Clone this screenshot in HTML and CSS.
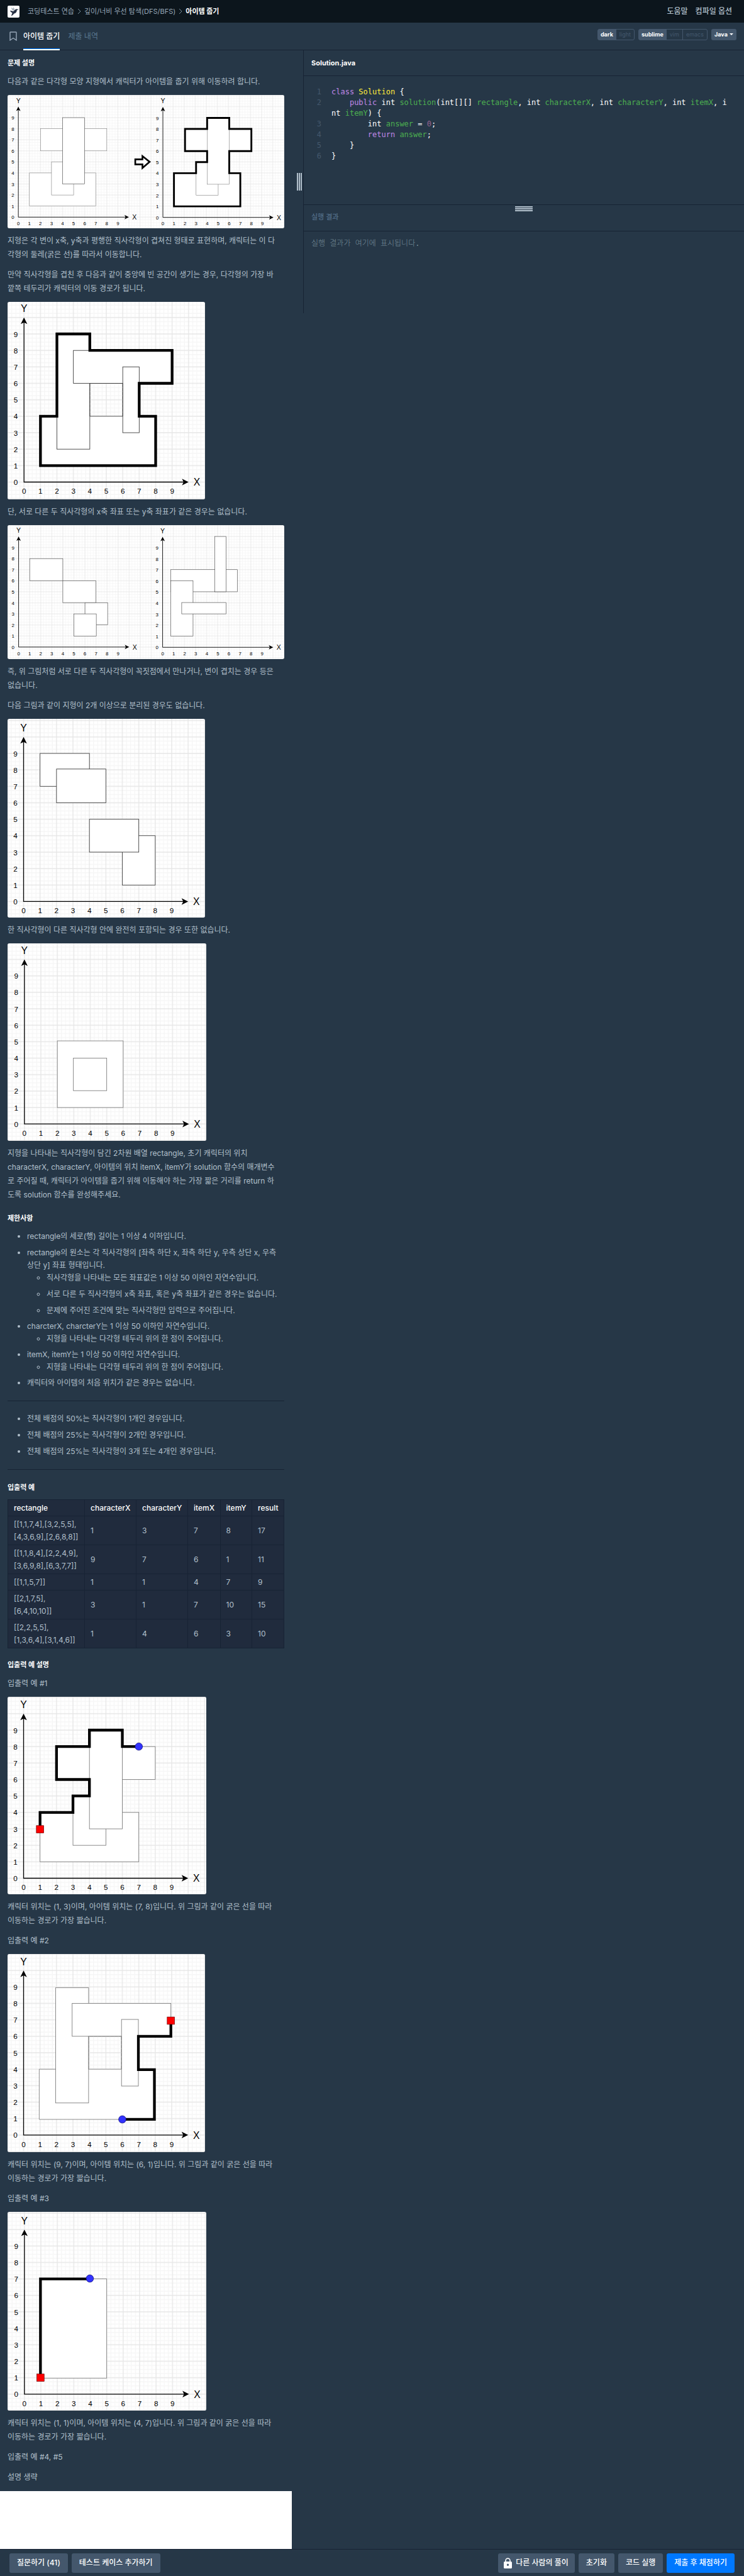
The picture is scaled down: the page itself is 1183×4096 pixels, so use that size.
FILE: index.html
```html
<!DOCTYPE html>
<html lang="ko">
<head>
<meta charset="utf-8">
<meta name="viewport" content="width=device-width, initial-scale=1">
<title>코딩테스트 연습 - 아이템 줍기</title>
<link rel="stylesheet" href="styles.css">
</head>
<body>
<!-- Shared drawing parts: graph paper, axes with labels, markers. One unit is 40. -->
<svg class="defs" width="0" height="0" aria-hidden="true">
  <defs>
    <pattern id="paper" width="40" height="40" patternUnits="userSpaceOnUse">
      <path class="minor" d="M10 0V40M20 0V40M30 0V40M0 10H40M0 20H40M0 30H40"/>
      <path class="major" d="M0 0V40M40 0V40M0 0H40M0 40H40"/>
    </pattern>
    <g id="axes">
      <path class="axis" d="M0 -390V0H390"/>
      <path d="M0 -400L8 -384L0 -388L-8 -384Z"/>
      <path d="M400 0L384 8L388 0L384 -8Z"/>
      <g class="tick">
        <text x="-20" y="7">0</text><text x="-20" y="-33">1</text><text x="-20" y="-73">2</text><text x="-20" y="-113">3</text><text x="-20" y="-153">4</text><text x="-20" y="-193">5</text><text x="-20" y="-233">6</text><text x="-20" y="-273">7</text><text x="-20" y="-313">8</text><text x="-20" y="-353">9</text>
        <text x="0" y="29">0</text><text x="40" y="29">1</text><text x="80" y="29">2</text><text x="120" y="29">3</text><text x="160" y="29">4</text><text x="200" y="29">5</text><text x="240" y="29">6</text><text x="280" y="29">7</text><text x="320" y="29">8</text><text x="360" y="29">9</text>
      </g>
      <g class="name"><text x="0" y="-413">Y</text><text x="420" y="9">X</text></g>
    </g>
    <rect id="start" x="-9" y="-9" width="18" height="18"/>
    <circle id="item" r="9"/>
  </defs>
</svg>

<header class="topbar">
  <a class="logo" href="#" aria-label="홈">
    <svg viewBox="0 0 30 30" width="18" height="18" aria-hidden="true">
      <path fill="#a9b3bd" d="M8 5l5 3 1-4 3 5-1 5-6-3z"/>
      <path fill="#263043" d="M5 13l9 2 3-3c2-2 3-3 5-3l6 1-5 2c0 5-3 8-7 9l-5 5-3 1 3-8c-3-1-5-3-6-6z"/>
    </svg>
  </a>
  <nav class="crumbs" aria-label="위치">
    <a href="#">코딩테스트 연습</a>
    <svg viewBox="0 0 6 10" width="6" height="10" aria-hidden="true"><path d="M1 1l4 4-4 4"/></svg>
    <a href="#">깊이/너비 우선 탐색(DFS/BFS)</a>
    <svg viewBox="0 0 6 10" width="6" height="10" aria-hidden="true"><path d="M1 1l4 4-4 4"/></svg>
    <strong>아이템 줍기</strong>
  </nav>
  <nav class="help"><a href="#">도움말</a><a href="#">컴파일 옵션</a></nav>
</header>

<div class="tabbar">
  <button class="bookmark" type="button" aria-label="북마크">
    <svg viewBox="0 0 12 15" width="12" height="15" aria-hidden="true"><path d="M1 1.5Q1 1 2 1h8q1 0 1 .5V14L6 10.500 1 14z"/></svg>
  </button>
  <nav class="tabs"><a class="tab active" href="#">아이템 줍기</a><a class="tab" href="#">제출 내역</a></nav>
  <div class="options">
    <div class="toggle"><button class="on" type="button">dark</button><button type="button">light</button></div>
    <div class="toggle"><button class="on" type="button">sublime</button><button type="button">vim</button><button type="button">emacs</button></div>
    <div class="language"><select aria-label="언어"><option>Java</option></select></div>
  </div>
</div>

<main class="workspace">
  <section class="description">
    <div class="guide">
      <h2>문제 설명</h2>
      <p>다음과 같은 다각형 모양 지형에서 캐릭터가 아이템을 줍기 위해 이동하려 합니다.</p>
      <figure class="wide">
        <svg viewBox="-39 -442 1001 483" role="img" aria-label="겹쳐진 직사각형과 그 둘레">
          <rect class="paper" x="-39" y="-442" width="1001" height="483"/>
          <use href="#axes"/>
          <g class="box soft"><rect x="40" y="-160" width="240" height="120"/><rect x="120" y="-200" width="80" height="120"/><rect x="80" y="-320" width="240" height="80"/></g>
          <g class="box"><rect x="160" y="-360" width="80" height="240"/></g>
          <path class="arrow" d="M423 -209H449V-221L475 -200L449 -178V-191H423Z"/>
          <g transform="translate(523 1)">
            <use href="#axes"/>
            <g class="box soft"><rect x="40" y="-160" width="240" height="120"/><rect x="120" y="-200" width="80" height="120"/><rect x="80" y="-320" width="240" height="80"/><rect x="160" y="-360" width="80" height="240"/></g>
            <path class="route" d="M40 -40V-160H120V-200H160V-240H80V-320H160V-360H240V-320H320V-240H240V-160H280V-40Z"/>
          </g>
        </svg>
      </figure>
      <p>지형은 각 변이 x축, y축과 평행한 직사각형이 겹쳐진 형태로 표현하며, 캐릭터는 이 다<br>각형의 둘레(굵은 선)를 따라서 이동합니다.</p>
      <p>만약 직사각형을 겹친 후 다음과 같이 중앙에 빈 공간이 생기는 경우, 다각형의 가장 바<br>깥쪽 테두리가 캐릭터의 이동 경로가 됩니다.</p>
      <figure>
        <svg viewBox="-40 -438 480 480" role="img" aria-label="가운데가 빈 지형의 바깥쪽 테두리">
          <rect class="paper" x="-40" y="-438" width="480" height="480"/>
          <use href="#axes"/>
          <g class="box"><path d="M40 -160H160V-240H240V-160H320V-40H40Z"/><rect x="80" y="-360" width="80" height="280"/><rect x="120" y="-320" width="240" height="80"/><rect x="240" y="-280" width="40" height="160"/></g>
          <path class="hole" d="M160 -240H240V-160H160Z"/>
          <path class="route" d="M40 -40V-160H80V-360H160V-320H360V-240H280V-160H320V-40Z"/>
        </svg>
      </figure>
      <p>단, 서로 다른 두 직사각형의 x축 좌표 또는 y축 좌표가 같은 경우는 없습니다.</p>
      <figure class="wide">
        <svg viewBox="-40 -441 1001 483" role="img" aria-label="꼭짓점이나 변이 만나는 직사각형">
          <rect class="paper" x="-40" y="-441" width="1001" height="483"/>
          <use href="#axes"/>
          <g class="box"><rect x="40" y="-320" width="120" height="80"/><rect x="160" y="-240" width="120" height="80"/><rect x="240" y="-160" width="82" height="80"/><rect x="200" y="-120" width="81" height="80"/></g>
          <use href="#axes" x="521" y="1"/>
          <g class="box" transform="translate(510 0)"><rect x="40" y="-280" width="241" height="80"/><rect x="40" y="-240" width="81" height="200"/><rect x="200" y="-400" width="41" height="200"/><rect x="80" y="-161" width="161" height="41"/></g>
        </svg>
      </figure>
      <p>즉, 위 그림처럼 서로 다른 두 직사각형이 꼭짓점에서 만나거나, 변이 겹치는 경우 등은<br>없습니다.</p>
      <p>다음 그림과 같이 지형이 2개 이상으로 분리된 경우도 없습니다.</p>
      <figure>
        <svg viewBox="-39 -444 480 483" role="img" aria-label="두 개로 분리된 지형">
          <rect class="paper" x="-39" y="-444" width="480" height="483"/>
          <use href="#axes"/>
          <g class="box"><rect x="40" y="-360" width="120" height="80"/><rect x="80" y="-322" width="120" height="82"/><rect x="240" y="-160" width="80" height="120"/><rect x="160" y="-200" width="120" height="80"/></g>
        </svg>
      </figure>
      <p>한 직사각형이 다른 직사각형 안에 완전히 포함되는 경우 또한 없습니다.</p>
      <figure class="large">
        <svg viewBox="-41 -439 483 480" role="img" aria-label="안에 포함된 직사각형">
          <rect class="paper" x="-41" y="-439" width="483" height="480"/>
          <use href="#axes"/>
          <g class="box soft"><rect x="80" y="-202" width="160" height="162"/><rect x="119" y="-160" width="81" height="79"/></g>
        </svg>
      </figure>
      <p>지형을 나타내는 직사각형이 담긴 2차원 배열 rectangle, 초기 캐릭터의 위치<br>characterX, characterY, 아이템의 위치 itemX, itemY가 solution 함수의 매개변수<br>로 주어질 때, 캐릭터가 아이템을 줍기 위해 이동해야 하는 가장 짧은 거리를 return 하<br>도록 solution 함수를 완성해주세요.</p>

      <h2>제한사항</h2>
      <ul>
        <li>rectangle의 세로(행) 길이는 1 이상 4 이하입니다.</li>
        <li>rectangle의 원소는 각 직사각형의 [좌측 하단 x, 좌측 하단 y, 우측 상단 x, 우측<br>상단 y] 좌표 형태입니다.
          <ul>
            <li>직사각형을 나타내는 모든 좌표값은 1 이상 50 이하인 자연수입니다.</li>
            <li>서로 다른 두 직사각형의 x축 좌표, 혹은 y축 좌표가 같은 경우는 없습니다.</li>
            <li>문제에 주어진 조건에 맞는 직사각형만 입력으로 주어집니다.</li>
          </ul>
        </li>
        <li>charcterX, charcterY는 1 이상 50 이하인 자연수입니다.
          <ul><li>지형을 나타내는 다각형 테두리 위의 한 점이 주어집니다.</li></ul>
        </li>
        <li>itemX, itemY는 1 이상 50 이하인 자연수입니다.
          <ul><li>지형을 나타내는 다각형 테두리 위의 한 점이 주어집니다.</li></ul>
        </li>
        <li>캐릭터와 아이템의 처음 위치가 같은 경우는 없습니다.</li>
      </ul>
      <hr>
      <ul>
        <li>전체 배점의 50%는 직사각형이 1개인 경우입니다.</li>
        <li>전체 배점의 25%는 직사각형이 2개인 경우입니다.</li>
        <li>전체 배점의 25%는 직사각형이 3개 또는 4개인 경우입니다.</li>
      </ul>
      <hr>

      <h2>입출력 예</h2>
      <table>
        <thead><tr><th scope="col">rectangle</th><th scope="col">characterX</th><th scope="col">characterY</th><th scope="col">itemX</th><th scope="col">itemY</th><th scope="col">result</th></tr></thead>
        <tbody>
          <tr><td>[[1,1,7,4],[3,2,5,5],<br>[4,3,6,9],[2,6,8,8]]</td><td>1</td><td>3</td><td>7</td><td>8</td><td>17</td></tr>
          <tr><td>[[1,1,8,4],[2,2,4,9],<br>[3,6,9,8],[6,3,7,7]]</td><td>9</td><td>7</td><td>6</td><td>1</td><td>11</td></tr>
          <tr><td>[[1,1,5,7]]</td><td>1</td><td>1</td><td>4</td><td>7</td><td>9</td></tr>
          <tr><td>[[2,1,7,5],<br>[6,4,10,10]]</td><td>3</td><td>1</td><td>7</td><td>10</td><td>15</td></tr>
          <tr><td>[[2,2,5,5],<br>[1,3,6,4],[3,1,4,6]]</td><td>1</td><td>4</td><td>6</td><td>3</td><td>10</td></tr>
        </tbody>
      </table>

      <h2>입출력 예 설명</h2>
      <p>입출력 예 #1</p>
      <figure class="large">
        <svg viewBox="-39 -441 483 480" role="img" aria-label="예 1의 가장 짧은 경로">
          <rect class="paper" x="-39" y="-441" width="483" height="480"/>
          <use href="#axes"/>
          <g class="box soft"><rect x="40" y="-160" width="240" height="120"/><rect x="120" y="-200" width="80" height="120"/><rect x="80" y="-320" width="240" height="80"/><rect x="160" y="-360" width="80" height="240"/></g>
          <path class="route" d="M40 -120V-160H120V-200H160V-240H80V-320H160V-360H240V-320H280"/>
          <use class="start" href="#start" x="40" y="-119"/><use class="item" href="#item" x="280" y="-320"/>
        </svg>
      </figure>
      <p>캐릭터 위치는 (1, 3)이며, 아이템 위치는 (7, 8)입니다. 위 그림과 같이 굵은 선을 따라<br>이동하는 경로가 가장 짧습니다.</p>
      <p>입출력 예 #2</p>
      <figure>
        <svg viewBox="-39 -440 480 482" role="img" aria-label="예 2의 가장 짧은 경로">
          <rect class="paper" x="-39" y="-440" width="480" height="482"/>
          <use href="#axes"/>
          <g class="box soft"><path d="M38 -160H158V-240H238V-160H318V-38H38Z"/><rect x="78" y="-358" width="80" height="280"/><rect x="118" y="-320" width="240" height="80"/><rect x="238" y="-281" width="41" height="162"/></g>
          <path class="hole soft" d="M158 -240H238V-160H158Z"/>
          <path class="route" d="M240 -38H318V-159H279V-240H358V-278"/>
          <use class="start" href="#start" x="358" y="-278"/><use class="item" href="#item" x="240" y="-38"/>
        </svg>
      </figure>
      <p>캐릭터 위치는 (9, 7)이며, 아이템 위치는 (6, 1)입니다. 위 그림과 같이 굵은 선을 따라<br>이동하는 경로가 가장 짧습니다.</p>
      <p>입출력 예 #3</p>
      <figure class="large">
        <svg viewBox="-41 -443 483 483" role="img" aria-label="예 3의 가장 짧은 경로">
          <rect class="paper" x="-41" y="-443" width="483" height="483"/>
          <use href="#axes"/>
          <g class="box soft"><rect x="39" y="-280" width="161" height="241"/></g>
          <path class="route" d="M39 -40V-280H160"/>
          <use class="start" href="#start" x="39" y="-40"/><use class="item" href="#item" x="159" y="-281"/>
        </svg>
      </figure>
      <p>캐릭터 위치는 (1, 1)이며, 아이템 위치는 (4, 7)입니다. 위 그림과 같이 굵은 선을 따라<br>이동하는 경로가 가장 짧습니다.</p>
      <p>입출력 예 #4, #5</p>
      <p>설명 생략</p>
    </div>
    <div class="blank"></div>
  </section>

  <div class="gutter"><span class="grip"></span></div>

  <section class="editor">
    <h2 class="filename">Solution.java</h2>
    <div class="code">
      <div class="line"><span class="no">1</span><code><i class="kw">class</i> <i class="ty">Solution</i> {</code></div>
      <div class="line"><span class="no">2</span><code>    <i class="kw">public</i> int <i class="id">solution</i>(int[][] <i class="id">rectangle</i>, int <i class="id">characterX</i>, int <i class="id">characterY</i>, int <i class="id">itemX</i>, i<br>nt <i class="id">itemY</i>) {</code></div>
      <div class="line"><span class="no">3</span><code>        int <i class="id">answer</i> = <i class="nu">0</i>;</code></div>
      <div class="line"><span class="no">4</span><code>        <i class="kw">return</i> <i class="id">answer</i>;</code></div>
      <div class="line"><span class="no">5</span><code>    }</code></div>
      <div class="line"><span class="no">6</span><code>}</code></div>
    </div>
    <div class="result-head"><span class="grip flat"></span><h2>실행 결과</h2></div>
    <p class="result">실행 결과가 여기에 표시됩니다.</p>
  </section>
</main>

<footer class="actions">
  <button type="button">질문하기 (41)</button>
  <button type="button">테스트 케이스 추가하기</button>
  <span class="spacer"></span>
  <button class="locked" type="button"><svg viewBox="0 0 13 17" width="13" height="17" aria-hidden="true"><path fill="none" stroke="#fff" stroke-width="1.600" d="M3 7V4.500a3.500 3.500 0 0 1 7 0V7"/><path fill="#fff" fill-rule="evenodd" d="M1.500 6h10Q13 6 13 7.500v8q0 1.500-1.500 1.500h-10Q0 17 0 15.500v-8Q0 6 1.500 6zM6.500 9.500a1.700 1.700 0 1 0 0 3.400 1.700 1.700 0 1 0 0-3.400z"/></svg>다른 사람의 풀이</button>
  <button type="button">초기화</button>
  <button type="button">코드 실행</button>
  <button class="primary" type="button">제출 후 채점하기</button>
</footer>
</body>
</html>
```

FILE: styles.css
```css
* { box-sizing: border-box; }

body {
  margin: 0;
  background: #263747;
  color: #b2c0cc;
  font: 12px/22px Inter, "Noto Sans CJK KR", sans-serif;
}

h2, p, ul, figure { margin: 0; }
a { color: inherit; text-decoration: none; }
button, select { font: inherit; border: 0; padding: 0; background: none; color: inherit; }
.defs { position: absolute; }

/* Top bar */
.topbar {
  display: flex;
  align-items: center;
  height: 36px;
  padding: 0 19px 0 12px;
  background: #0c151c;
}
.logo {
  display: flex;
  width: 19px;
  height: 19px;
  align-items: center;
  justify-content: center;
  border-radius: 2px;
  background: #fff;
}
.crumbs {
  display: flex;
  align-items: center;
  gap: 5px;
  margin-left: 13px;
  font-size: 11px;
  color: #98a8b9;
}
.crumbs svg { fill: none; stroke: #78909c; }
.crumbs strong { color: #fff; font-weight: 700; }
.help { display: flex; gap: 12px; margin-left: auto; font-weight: 500; }

/* Tabs and editor options */
.tabbar {
  display: flex;
  height: 44px;
  padding: 0 12px 0 15px;
  border-bottom: 1px solid #172334;
}
.bookmark { display: flex; align-items: center; }
.bookmark svg { fill: none; stroke: #98a8b9; stroke-width: 1.4; }
.tabs { display: flex; gap: 13px; margin: 0 0 -1px 10px; }
.tab {
  display: flex;
  align-items: center;
  padding-top: 2px;
  border-bottom: 2px solid transparent;
  color: #5a7890;
}
.tab.active { color: #fff; font-weight: 500; border-color: #fff; box-shadow: inset 0 -1px #0078ff; }
.options { display: flex; gap: 6px; margin: 10px 0 0 auto; font-size: 9px; line-height: 16px; }
.toggle { display: flex; height: 18px; border: 1px solid #44576c; border-radius: 3px; }
.toggle button { padding: 0 5px; color: #44576c; }
.toggle button + button { border-left: 1px solid #44576c; }
.toggle .on { padding: 0 4px; background: #44576c; color: #fff; font-weight: 700; }
.language { position: relative; height: 18px; }
.language select {
  appearance: none;
  width: 40px;
  height: 18px;
  padding: 0 5px;
  border-radius: 3px;
  background: #44576c;
  color: #fff;
  font-weight: 700;
}
.language::after {
  content: "";
  position: absolute;
  right: 5px;
  top: 7px;
  border: 3px solid transparent;
  border-top-color: #fff;
  border-bottom: 0;
}

/* Workspace columns */
.workspace {
  display: grid;
  grid-template-columns: minmax(0, 464fr) minmax(0, 18fr) minmax(0, 701fr);
  align-items: start;
}
.guide { padding: 10px 12px 11px; }
.guide h2, .filename, .result-head h2 { font-size: 11px; line-height: 20px; font-weight: 700; color: #fff; }
.guide h2 { margin: 16px 0 9px; }
.guide h2:first-child { margin-top: 0; }
.guide > p { margin-bottom: 10px; }
.guide > p:last-child { margin-bottom: 0; }
.guide ul { padding-left: 31px; line-height: 20px; }
.guide li + li { margin-top: 6px; }
.guide ul ul { margin-bottom: -1px; }
.guide hr { height: 1px; margin: 18px 0; border: 0; background: #172334; }
.guide hr + h2 { margin-top: 16px; }
.blank { height: 92px; background: #fff; }

/* Figures */
figure { width: 314px; max-width: 100%; margin-bottom: 9px; }
figure.large { width: 316px; }
figure.wide { width: 100%; }
figure svg { display: block; width: 100%; border-radius: 3px; background: #fff; }
.paper, .hole { fill: url(#paper); }
.minor { fill: none; stroke: #f6f6f6; stroke-width: 2; }
.major { fill: none; stroke: #e6e6e6; stroke-width: 2; }
.axis { fill: none; stroke: #000; stroke-width: 2; }
.tick { font: 18px "Liberation Sans", sans-serif; text-anchor: middle; }
.name { font: 24px "Liberation Sans", sans-serif; text-anchor: middle; }
.box { fill: #fff; }
.box, .hole { stroke: #333; stroke-width: 1.3; }
.soft { stroke: #777; }
.route { fill: none; stroke: #000; stroke-width: 6.6; }
.arrow { fill: #fff; stroke: #000; stroke-width: 6; }
.start { fill: #f00; stroke: #600; }
.item { fill: #33f; stroke: #006; }

/* Example table */
table { width: 100%; border-collapse: collapse; background: #202b3d; line-height: 20px; }
th, td { padding: 3px 8px 2px 9px; border: 1px solid #172334; text-align: left; white-space: nowrap; }
th { color: #fff; font-weight: 500; }
th:first-child { width: 122px; }

/* Divider handles */
.gutter { display: flex; align-items: center; justify-content: flex-end; height: 418px; padding-right: 2px; }
.grip { width: 8px; height: 28px; background: repeating-linear-gradient(90deg, #b2c0cc 0 2px, transparent 2px 3px); }
.grip.flat { width: 28px; height: 8px; background: repeating-linear-gradient(#b2c0cc 0 2px, transparent 2px 3px); }

/* Editor */
.editor { height: 418px; border-left: 1px solid #172334; }
.filename { padding: 10px 12px; border-bottom: 1px solid #172334; }
.code {
  height: 205px;
  padding: 17px 24px 0 0;
  border-bottom: 1px solid #172334;
  font: 12px/17px "DejaVu Sans Mono", "Noto Sans CJK KR", monospace;
  color: #fff;
}
.line { display: grid; grid-template-columns: 28px 1fr; column-gap: 16px; }
.no { text-align: right; color: #44576c; }
.code code { font: inherit; white-space: pre-wrap; word-break: break-all; }
.code i { font-style: normal; }
.kw { color: #c088e8; }
.ty { color: #ffeb3b; }
.id { color: #4caf50; }
.nu { color: #996490; }
.result-head {
  display: flex;
  flex-direction: column;
  align-items: center;
  height: 42px;
  padding-top: 2px;
  border-bottom: 1px solid #172334;
}
.result-head h2 { align-self: flex-start; margin-left: 12px; font-weight: 500; line-height: 18px; color: #54708a; }
.result {
  padding: 8px 12px;
  font-family: "DejaVu Sans Mono", "Noto Sans CJK KR", monospace;
  font-weight: 300;
  color: #78909c;
}

/* Bottom bar */
.actions {
  display: flex;
  align-items: flex-start;
  gap: 6px;
  height: 45px;
  padding: 6px 15px 0;
  border-top: 1px solid #172334;
}
.actions button {
  display: flex;
  align-items: center;
  height: 31px;
  padding: 0 12px;
  border-radius: 3px;
  background: #44576c;
  color: #fff;
  font-weight: 500;
}
.actions .locked { gap: 6px; padding: 0 10px 0 9px; }
.actions .primary { background: #0078ff; }
.spacer { flex: 1; }
```
